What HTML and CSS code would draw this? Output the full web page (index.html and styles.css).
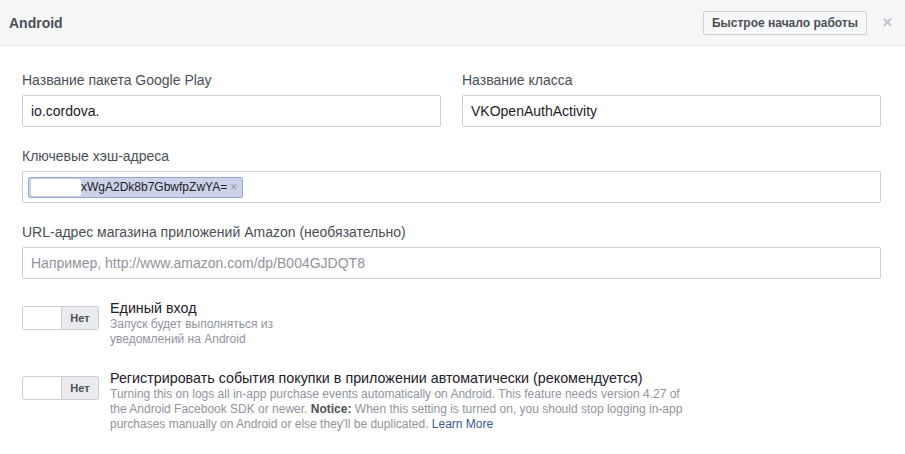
FILE: index.html
```html
<!DOCTYPE html>
<html lang="ru">

<head>
    <meta charset="UTF-8">
    <meta name="viewport" content="width=device-width, initial-scale=1.0">
    <title>Android</title>
    <link rel="stylesheet" href="styles.css">
</head>

<body>
    <div class="panel">
        <header class="panel-head">
            <h2>Android</h2>
            <div class="head-tools">
                <button class="quick-btn">Быстрое начало работы</button>
                <span class="close">&#x2715;</span>
            </div>
        </header>

        <div class="panel-body">
            <div class="row two">
                <div class="field">
                    <label>Название пакета Google Play</label>
                    <div class="input">io.cordova.</div>
                </div>
                <div class="field">
                    <label>Название класса</label>
                    <div class="input">VKOpenAuthActivity</div>
                </div>
            </div>

            <div class="field">
                <label>Ключевые хэш-адреса</label>
                <div class="input tokens">
                    <span class="token">
                        <span class="blur"></span>
                        <span>xWgA2Dk8b7GbwfpZwYA=</span>
                        <span class="token-x">&#x2715;</span>
                    </span>
                </div>
            </div>

            <div class="field">
                <label>URL-адрес магазина приложений Amazon (необязательно)</label>
                <div class="input placeholder">Например, http://www.amazon.com/dp/B004GJDQT8</div>
            </div>

            <div class="option">
                <div class="toggle">
                    <span class="toggle-on"></span>
                    <span class="toggle-off">Нет</span>
                </div>
                <div class="option-text">
                    <div class="option-title">Единый вход</div>
                    <div class="option-desc narrow">Запуск будет выполняться из уведомлений на Android</div>
                </div>
            </div>

            <div class="option">
                <div class="toggle">
                    <span class="toggle-on"></span>
                    <span class="toggle-off">Нет</span>
                </div>
                <div class="option-text">
                    <div class="option-title">Регистрировать события покупки в приложении автоматически (рекомендуется)</div>
                    <div class="option-desc">Turning this on logs all in-app purchase events automatically on Android. This feature needs version 4.27 of the Android Facebook SDK or newer. <b>Notice:</b> When this setting is turned on, you should stop logging in-app purchases manually on Android or else they'll be duplicated. <a href="#">Learn More</a></div>
                </div>
            </div>
        </div>
    </div>
</body>

</html>
```

FILE: styles.css
```css
* {
    box-sizing: border-box;
}

body {
    margin: 0;
    background-color: #fff;
    font-family: "Liberation Sans", Arial, sans-serif;
    color: #1d2129;
}

.panel-head {
    height: 46px;
    background-color: #f5f6f7;
    border-bottom: 1px solid #e5e5e5;
    display: flex;
    align-items: center;
    justify-content: space-between;
    padding: 0 12px 0 9px;
}

.panel-head h2 {
    margin: 0;
    font-size: 14px;
    font-weight: bold;
    color: #4b4f56;
}

.head-tools {
    display: flex;
    align-items: center;
}

.quick-btn {
    height: 24px;
    padding: 0 8px;
    background-color: #f6f7f9;
    border: 1px solid #ced0d4;
    border-radius: 2px;
    font-family: inherit;
    font-size: 12px;
    font-weight: bold;
    color: #4b4f56;
}

.close {
    margin-left: 15px;
    font-size: 13px;
    font-weight: bold;
    color: #bec2c9;
}

.panel-body {
    padding: 25px 24px 0 22px;
}

.row.two {
    display: flex;
    gap: 21px;
}

.row.two .field {
    flex: 1;
}

.field {
    margin-bottom: 20px;
}

.field label {
    display: block;
    font-size: 14px;
    color: #4b4f56;
    line-height: 18px;
    margin-bottom: 6px;
}

.input {
    height: 32px;
    border: 1px solid #ccd0d5;
    border-radius: 2px;
    padding: 0 8px;
    font-size: 14px;
    line-height: 30px;
    color: #1d2129;
}

.placeholder {
    color: #90949c;
}

.tokens {
    padding: 0 5px;
    display: flex;
    align-items: center;
}

.token {
    display: flex;
    align-items: center;
    height: 21px;
    padding: 0 4px 0 2px;
    background-color: #ccd3e8;
    border: 1px solid #97a7d3;
    border-radius: 2px;
    font-size: 12px;
    line-height: 19px;
    color: #1d2129;
}

.blur {
    width: 50px;
    height: 17px;
    background-color: #fff;
    border-radius: 3px;
}

.token-x {
    margin-left: 3px;
    font-size: 9px;
    font-weight: bold;
    color: #a0a4ac;
}

.option {
    display: flex;
    align-items: flex-start;
    margin-top: 8px;
    margin-bottom: 22px;
}

.toggle {
    display: flex;
    width: 77px;
    height: 24px;
    border: 1px solid #ccd0d5;
    border-radius: 2px;
    margin-top: 7px;
    flex-shrink: 0;
}

.toggle-on {
    width: 39px;
    background-color: #fff;
    border-right: 1px solid #ccd0d5;
}

.toggle-off {
    flex: 1;
    background-color: #e9ebee;
    font-size: 11px;
    font-weight: bold;
    color: #4b4f56;
    text-align: center;
    line-height: 22px;
}

.option-text {
    margin-left: 11px;
}

.option-title {
    font-size: 14.3px;
    line-height: 18px;
    color: #1d2129;
}

.option-desc {
    font-size: 12px;
    line-height: 15px;
    color: #90949c;
    width: 580px;
}

.option-desc.narrow {
    width: 180px;
}

.option-desc b {
    color: #4b4f56;
}

.option-desc a {
    color: #365899;
    text-decoration: none;
}
```
